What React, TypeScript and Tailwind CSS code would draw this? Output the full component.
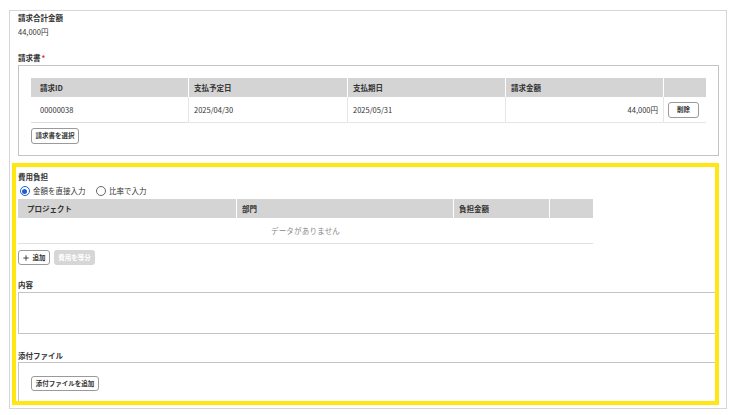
import React from "react";

function Btn({ children, className = "" }: { children: React.ReactNode; className?: string }) {
  return (
    <div
      className={
        "flex items-center justify-center rounded-[3px] border border-[#9a9a9a] bg-white text-[6.5px] font-bold text-[#333] " +
        className
      }
    >
      {children}
    </div>
  );
}

export default function App() {
  return (
    <div className="w-[735px] h-[415px] overflow-hidden bg-white font-['Noto_Sans_CJK_JP','Noto_Sans',sans-serif] text-[#333]">
      <div className="relative ml-[9px] mt-[10px] h-[399px] w-[718px] border border-[#d6d6d6] pl-[8px] pr-[7px]">
        {/* 請求合計金額 */}
        <div className="h-[14px] text-[7.5px] font-bold leading-[14px]">請求合計金額</div>
        <div className="h-[14px] text-[7.5px] leading-[14px]">44,000円</div>

        {/* 請求書 */}
        <div className="mt-[12px] h-[14px] text-[7.5px] font-bold leading-[14px]">
          請求書<span className="ml-[1px] text-[#e0302a]">*</span>
        </div>
        <div className="border border-[#c4c4c4] px-[12px] pb-[11px] pt-[12px]">
          <div className="grid grid-cols-[157px_159px_158px_158px_43px] text-[7.5px]">
            <div className="flex h-[19px] items-center bg-[#d4d4d4] pl-[9px] font-bold">請求ID</div>
            <div className="flex h-[19px] items-center border-l-[1.5px] border-white bg-[#d4d4d4] pl-[5px] font-bold">支払予定日</div>
            <div className="flex h-[19px] items-center border-l-[1.5px] border-white bg-[#d4d4d4] pl-[5px] font-bold">支払期日</div>
            <div className="flex h-[19px] items-center border-l-[1.5px] border-white bg-[#d4d4d4] pl-[5px] font-bold">請求金額</div>
            <div className="h-[19px] border-l-[1.5px] border-white bg-[#d4d4d4]"></div>

            <div className="flex h-[26px] items-center border-b border-[#dedede] pl-[9px] text-[#333]">00000038</div>
            <div className="flex h-[26px] items-center border-b border-l border-[#e6e6e6] pl-[5px]">2025/04/30</div>
            <div className="flex h-[26px] items-center border-b border-l border-[#e6e6e6] pl-[5px]">2025/05/31</div>
            <div className="flex h-[26px] items-center justify-end border-b border-l border-[#e6e6e6] pr-[5px]">44,000円</div>
            <div className="flex h-[26px] items-center border-b border-l border-[#e6e6e6] pl-[4px]">
              <Btn className="h-[16px] w-[31px]">削除</Btn>
            </div>
          </div>
          <Btn className="mt-[5px] h-[16px] w-[48px]">請求書を選択</Btn>
        </div>

        {/* 費用負担 */}
        <div className="mt-[14px] h-[14px] text-[7.5px] font-bold leading-[14px]">費用負担</div>
        <div className="flex h-[14px] items-center text-[7.5px]">
          <div className="ml-[1.5px] flex h-[10px] w-[10px] items-center justify-center rounded-full border-[1.5px] border-[#1f5fcc]">
            <div className="h-[5px] w-[5px] rounded-full bg-[#1f5fcc]"></div>
          </div>
          <span className="ml-[3.5px]">金額を直接入力</span>
          <div className="ml-[10px] h-[10px] w-[10px] rounded-full border border-[#666]"></div>
          <span className="ml-[3.5px]">比率で入力</span>
        </div>

        <div className="mt-[1px] grid w-[575px] grid-cols-[218px_217px_96px_44px] text-[7.5px]">
          <div className="flex h-[19px] items-center bg-[#d4d4d4] pl-[9px] font-bold">プロジェクト</div>
          <div className="flex h-[19px] items-center border-l-[1.5px] border-white bg-[#d4d4d4] pl-[5px] font-bold">部門</div>
          <div className="flex h-[19px] items-center border-l-[1.5px] border-white bg-[#d4d4d4] pl-[5px] font-bold">負担金額</div>
          <div className="h-[19px] border-l-[1.5px] border-white bg-[#d4d4d4]"></div>
          <div className="col-span-4 flex h-[26px] items-center justify-center border-b border-[#e0e0e0] tracking-[0.2px] text-[#888]">
            データがありません
          </div>
        </div>

        <div className="mt-[6px] flex h-[15px] gap-[4px]">
          <Btn className="h-[15px] w-[32px] gap-[4px]">
            <svg width="6" height="6" viewBox="0 0 6 6" className="shrink-0">
              <path d="M3 0.3V5.7M0.3 3H5.7" stroke="#333" strokeWidth="0.9" />
            </svg>
            <span>追加</span>
          </Btn>
          <div className="flex h-[15px] w-[41px] items-center justify-center rounded-[3px] bg-[#d6d6d6] text-[6.5px] font-bold text-white">
            費用を等分
          </div>
        </div>

        {/* 内容 */}
        <div className="mt-[13px] h-[14px] text-[7.5px] font-bold leading-[14px]">内容</div>
        <div className="h-[42px] border border-[#c4c4c4]"></div>

        {/* 添付ファイル */}
        <div className="mt-[15px] h-[13px] text-[7.5px] font-bold leading-[13px]">添付ファイル</div>
        <div className="border border-[#c4c4c4] px-[12px] pb-[12px] pt-[13px]">
          <Btn className="h-[15px] w-[68px]">添付ファイルを追加</Btn>
        </div>

        {/* highlight overlay */}
        <div className="pointer-events-none absolute left-[2px] top-[152px] h-[242px] w-[707px] border-4 border-[#ffe812]"></div>
      </div>
    </div>
  );
}
